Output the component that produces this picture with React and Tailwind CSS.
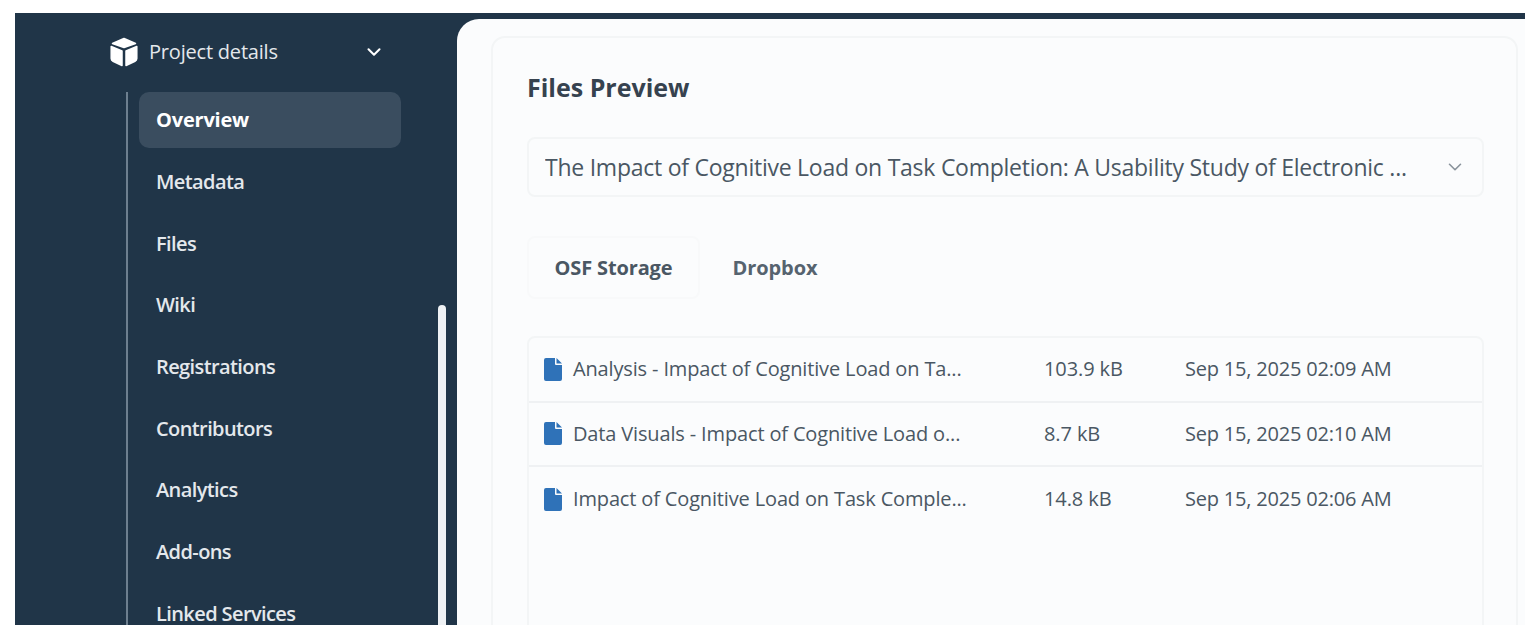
import React from 'react';
import { ChevronDown } from 'lucide-react';

const navItems = ['Overview', 'Metadata', 'Files', 'Wiki', 'Registrations', 'Contributors', 'Analytics', 'Add-ons', 'Linked Services'];

const files = [
  { name: 'Analysis - Impact of Cognitive Load on Ta...', size: '103.9 kB', date: 'Sep 15, 2025 02:09 AM' },
  { name: 'Data Visuals - Impact of Cognitive Load o...', size: '8.7 kB', date: 'Sep 15, 2025 02:10 AM' },
  { name: 'Impact of Cognitive Load on Task Comple...', size: '14.8 kB', date: 'Sep 15, 2025 02:06 AM' },
];

const CubeIcon = () => (
  <svg viewBox="0 0 28 30" className="w-[28px] h-[30px] shrink-0" fill="white" stroke="white" strokeWidth="1.5" strokeLinejoin="round">
    <path d="M14 1.5 L25.5 6.5 L14 10.5 L2.5 6.5 Z" />
    <path d="M1.2 9.5 L12 14 V28.5 L3 24.2 Q1.2 23.3 1.2 21.5 Z" />
    <path d="M26.8 9.5 L16 14 V28.5 L25 24.2 Q26.8 23.3 26.8 21.5 Z" />
  </svg>
);

const FileIcon = () => (
  <svg viewBox="0 0 18 23" className="w-[18px] h-[23px] shrink-0">
    <path d="M2 0 H11 V6 Q11 7 12 7 H18 V21 Q18 23 16 23 H2 Q0 23 0 21 V2 Q0 0 2 0 Z" fill="#2f72b8" />
    <path d="M12.5 0 L18 5.5 H12.5 Z" fill="#2f72b8" />
  </svg>
);

const Sidebar = () => (
  <div className="relative w-[442px] shrink-0 pl-[95px] pt-[15px] overflow-hidden">
    <div className="flex items-center h-[36px] text-[20px] text-[#e4e8ec] tracking-[-0.2px]">
      <CubeIcon />
      <span className="ml-[11px] w-[214px]">Project details</span>
      <ChevronDown className="w-[22px] h-[22px] text-white" strokeWidth={2.25} />
    </div>
    <div className="mt-[22px] ml-[16px] border-l-2 border-[#6d7f8f] pl-[11px] h-[540px]">
      <div className="w-[262px] flex flex-col">
        {navItems.map((item, i) => (
          <div
            key={item}
            className={
              i === 0
                ? 'h-[56px] mb-[6px] flex items-center pl-[17px] rounded-[10px] bg-[#3a4d5f] text-[20px] font-bold text-white tracking-[-0.2px]'
                : 'h-[22px] mt-[17px] mb-[22.7px] leading-[22px] pl-[17px] text-[20px] font-semibold text-[#e4e8ec] tracking-[-0.6px]'
            }
          >
            {item}
          </div>
        ))}
      </div>
    </div>
    <div className="absolute right-[11px] top-[286px] w-[8px] h-[340px] rounded-t-full bg-[#eef1f4]" />
  </div>
);

const App = () => (
  <div className="h-[640px] bg-white pt-[13px] pl-[15px] pr-[11px] pb-[15px] overflow-hidden" style={{ fontFamily: '"Open Sans", sans-serif' }}>
    <div className="h-[612px] bg-[#203548] flex pt-[6px] overflow-hidden">
      <Sidebar />
      <div className="flex-1 rounded-tl-[22px] bg-[#fbfcfd] pl-[34px] pr-[7px] pt-[17px] min-w-0">
        <div className="h-[620px] rounded-t-[14px] border-2 border-[#f3f5f6] pl-[34px] pr-[32px] pt-[30px] text-[#41505e]">
          <h2 className="text-[25px] leading-[38px] font-bold text-[#36424f]">Files Preview</h2>
          <div className="mt-[31px] h-[60px] rounded-[8px] border-2 border-[#f3f5f6] flex items-center pl-[16px] pr-[16px]">
            <span className="flex-1 text-[23px] text-[#4a5763] tracking-[-0.25px] whitespace-nowrap overflow-hidden">
              The Impact of Cognitive Load on Task Completion: A Usability Study of Electronic ...
            </span>
            <ChevronDown className="w-[22px] h-[22px] text-[#8a939c]" strokeWidth={1.75} />
          </div>
          <div className="mt-[39px] flex h-[63px] text-[20px] font-bold text-[#56636f]">
            <div className="w-[173px] rounded-[8px] border-2 border-[#f8f9fa] flex items-center justify-center text-[#4a5763] tracking-[-0.15px]">OSF Storage</div>
            <div className="w-[150px] flex items-center justify-center tracking-[-0.1px]">Dropbox</div>
          </div>
          <div className="mt-[37px] h-[300px] rounded-t-[8px] border-2 border-[#f3f5f6] text-[20px] text-[#4a5763]">
            {files.map((f, i) => (
              <div
                key={f.name}
                className={
                  i < 2
                    ? 'h-[64.5px] flex items-center pl-[15px] border-b-2 border-[#eff1f3] whitespace-nowrap'
                    : 'h-[64.5px] flex items-center pl-[15px] whitespace-nowrap'
                }
              >
                <FileIcon />
                <span className="ml-[11px] w-[471px] tracking-[-0.15px]">{f.name}</span>
                <span className="w-[141px] tracking-[-0.1px]">{f.size}</span>
                <span className="tracking-[-0.2px]">{f.date}</span>
              </div>
            ))}
          </div>
        </div>
      </div>
    </div>
  </div>
);

export default App;
